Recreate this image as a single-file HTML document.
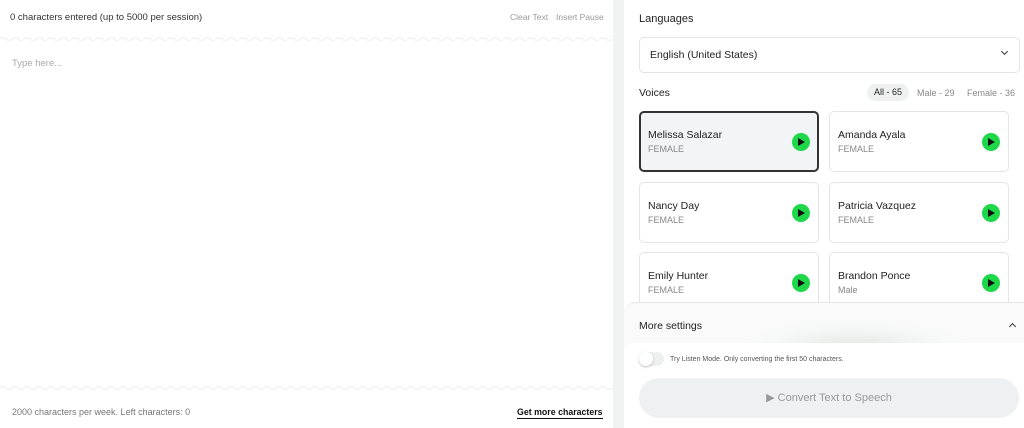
<!DOCTYPE html><html><head><style>
*{box-sizing:border-box;margin:0;padding:0}
body{width:1024px;height:428px;overflow:hidden;background:#f1f2f2;font-family:"Liberation Sans",sans-serif;position:relative;color:#222}
.l{position:absolute;left:0;top:0;width:613px;height:428px;background:#fff}
.r{position:absolute;left:624px;top:0;width:400px;height:428px;background:#fff}
.t{position:absolute;font-size:9.5px;white-space:nowrap}
.card{position:absolute;width:180px;height:61px;border:1px solid #e3e5e5;border-radius:5px;background:#fff}
.card .n{position:absolute;left:18px;top:17px;font-size:10.5px;color:#222}
.card .g{position:absolute;left:18px;top:32px;font-size:9px;color:#888}
.card .p{position:absolute;right:8px;top:21px;width:18px;height:18px;border-radius:50%;background:#1fd84a}
.card .p:after{content:"";position:absolute;left:6px;top:5px;border-left:7px solid #111;border-top:4px solid transparent;border-bottom:4px solid transparent}
</style></head><body>
<div class="l">
<div class="t" style="left:10px;top:12px;color:#333">0 characters entered (up to 5000 per session)</div>
<div class="t" style="left:510px;top:12px;color:#999;font-size:8.5px">Clear Text</div>
<div class="t" style="left:556px;top:12px;color:#999;font-size:8.5px">Insert Pause</div>
<svg style="position:absolute;left:0;top:36px" width="613" height="6"><path id="w" d="M0 3 Q3 0 6 3 T12 3 T18 3 T24 3 T30 3 T36 3 T42 3 T48 3 T54 3 T60 3 T66 3 T72 3 T78 3 T84 3 T90 3 T96 3 T102 3 T108 3 T114 3 T120 3 T126 3 T132 3 T138 3 T144 3 T150 3 T156 3 T162 3 T168 3 T174 3 T180 3 T186 3 T192 3 T198 3 T204 3 T210 3 T216 3 T222 3 T228 3 T234 3 T240 3 T246 3 T252 3 T258 3 T264 3 T270 3 T276 3 T282 3 T288 3 T294 3 T300 3 T306 3 T312 3 T318 3 T324 3 T330 3 T336 3 T342 3 T348 3 T354 3 T360 3 T366 3 T372 3 T378 3 T384 3 T390 3 T396 3 T402 3 T408 3 T414 3 T420 3 T426 3 T432 3 T438 3 T444 3 T450 3 T456 3 T462 3 T468 3 T474 3 T480 3 T486 3 T492 3 T498 3 T504 3 T510 3 T516 3 T522 3 T528 3 T534 3 T540 3 T546 3 T552 3 T558 3 T564 3 T570 3 T576 3 T582 3 T588 3 T594 3 T600 3 T606 3 T612 3" fill="none" stroke="#eceeee"/></svg>
<div class="t" style="left:12px;top:58px;color:#aaa;font-size:9.5px">Type here...</div>
<svg style="position:absolute;left:0;top:385px" width="613" height="6"><path d="M0 3 Q3 0 6 3 T12 3 T18 3 T24 3 T30 3 T36 3 T42 3 T48 3 T54 3 T60 3 T66 3 T72 3 T78 3 T84 3 T90 3 T96 3 T102 3 T108 3 T114 3 T120 3 T126 3 T132 3 T138 3 T144 3 T150 3 T156 3 T162 3 T168 3 T174 3 T180 3 T186 3 T192 3 T198 3 T204 3 T210 3 T216 3 T222 3 T228 3 T234 3 T240 3 T246 3 T252 3 T258 3 T264 3 T270 3 T276 3 T282 3 T288 3 T294 3 T300 3 T306 3 T312 3 T318 3 T324 3 T330 3 T336 3 T342 3 T348 3 T354 3 T360 3 T366 3 T372 3 T378 3 T384 3 T390 3 T396 3 T402 3 T408 3 T414 3 T420 3 T426 3 T432 3 T438 3 T444 3 T450 3 T456 3 T462 3 T468 3 T474 3 T480 3 T486 3 T492 3 T498 3 T504 3 T510 3 T516 3 T522 3 T528 3 T534 3 T540 3 T546 3 T552 3 T558 3 T564 3 T570 3 T576 3 T582 3 T588 3 T594 3 T600 3 T606 3 T612 3" fill="none" stroke="#eceeee"/></svg>
<div class="t" style="left:12px;top:407px;color:#777;font-size:9px">2000 characters per week. Left characters: 0</div>
<div class="t" style="left:517px;top:407px;color:#111;font-weight:bold;font-size:8.8px;border-bottom:1px solid #111;padding-bottom:1px">Get more characters</div>
</div>
<div class="r">
<div class="t" style="left:15px;top:13px;font-size:11px">Languages</div>
<div style="position:absolute;left:15px;top:37px;width:381px;height:36px;border:1px solid #e3e5e5;border-radius:5px"><span style="position:absolute;left:10px;top:11px;font-size:10.5px">English (United States)</span><span style="position:absolute;right:12px;top:11px;width:5px;height:5px;border-right:1.3px solid #333;border-bottom:1.3px solid #333;transform:rotate(45deg)"></span></div>
<div class="t" style="left:15px;top:87px;font-size:10.5px">Voices</div>
<div style="position:absolute;left:243px;top:84px;width:42px;height:17px;border-radius:9px;background:#eef1f0;font-size:9px;text-align:center;line-height:17px">All - 65</div>
<div class="t" style="left:293px;top:88px;font-size:9px;color:#888">Male - 29</div>
<div class="t" style="left:343px;top:88px;font-size:9px;color:#888">Female - 36</div>
<div class="card" style="left:15px;top:111px;background:#f1f5f5;border:2px solid #333"><div class="n" style="left:7px;top:16px">Melissa Salazar</div><div class="g" style="left:7px;top:31px">FEMALE</div><div class="p" style="right:7px;top:20px"></div></div>
<div class="card" style="left:205px;top:111px"><div class="n" style="left:8px">Amanda Ayala</div><div class="g" style="left:8px">FEMALE</div><div class="p"></div></div>
<div class="card" style="left:15px;top:182px"><div class="n" style="left:8px">Nancy Day</div><div class="g" style="left:8px">FEMALE</div><div class="p"></div></div>
<div class="card" style="left:205px;top:182px"><div class="n" style="left:8px">Patricia Vazquez</div><div class="g" style="left:8px">FEMALE</div><div class="p"></div></div>
<div class="card" style="left:15px;top:252px"><div class="n" style="left:8px">Emily Hunter</div><div class="g" style="left:8px">FEMALE</div><div class="p"></div></div>
<div class="card" style="left:205px;top:252px"><div class="n" style="left:8px">Brandon Ponce</div><div class="g" style="left:8px">Male</div><div class="p"></div></div>
<div style="position:absolute;left:0;top:302px;width:400px;height:50px;border-radius:12px 0 0 0;border-top:1px solid #e6e8e8;background:radial-gradient(ellipse 120px 30px at 230px 45px,#e2e8e4,#f6f8f7 70%,#fafafa)"><span style="position:absolute;left:15px;top:17px;font-size:10.5px">More settings</span><span style="position:absolute;right:9px;top:21px;width:5px;height:5px;border-left:1.3px solid #333;border-top:1.3px solid #333;transform:rotate(45deg)"></span></div>
<div style="position:absolute;left:0;top:343px;width:400px;height:85px;background:#fff;border-radius:10px 0 0 0">
<div style="position:absolute;left:15px;top:9px;width:25px;height:14px;border-radius:7px;background:#eef0f0"><div style="width:14px;height:14px;border-radius:50%;background:#fff;box-shadow:0 1px 2px rgba(0,0,0,.25)"></div></div>
<span style="position:absolute;left:46px;top:13px;font-size:7px;color:#555">Try Listen Mode. Only converting the first 50 characters.</span>
<div style="position:absolute;left:15px;top:35px;width:380px;height:40px;border-radius:20px;background:#eef1f1;text-align:center;line-height:40px;font-size:11px;color:#999">▶ Convert Text to Speech</div>
</div>
</div>
</body></html>
